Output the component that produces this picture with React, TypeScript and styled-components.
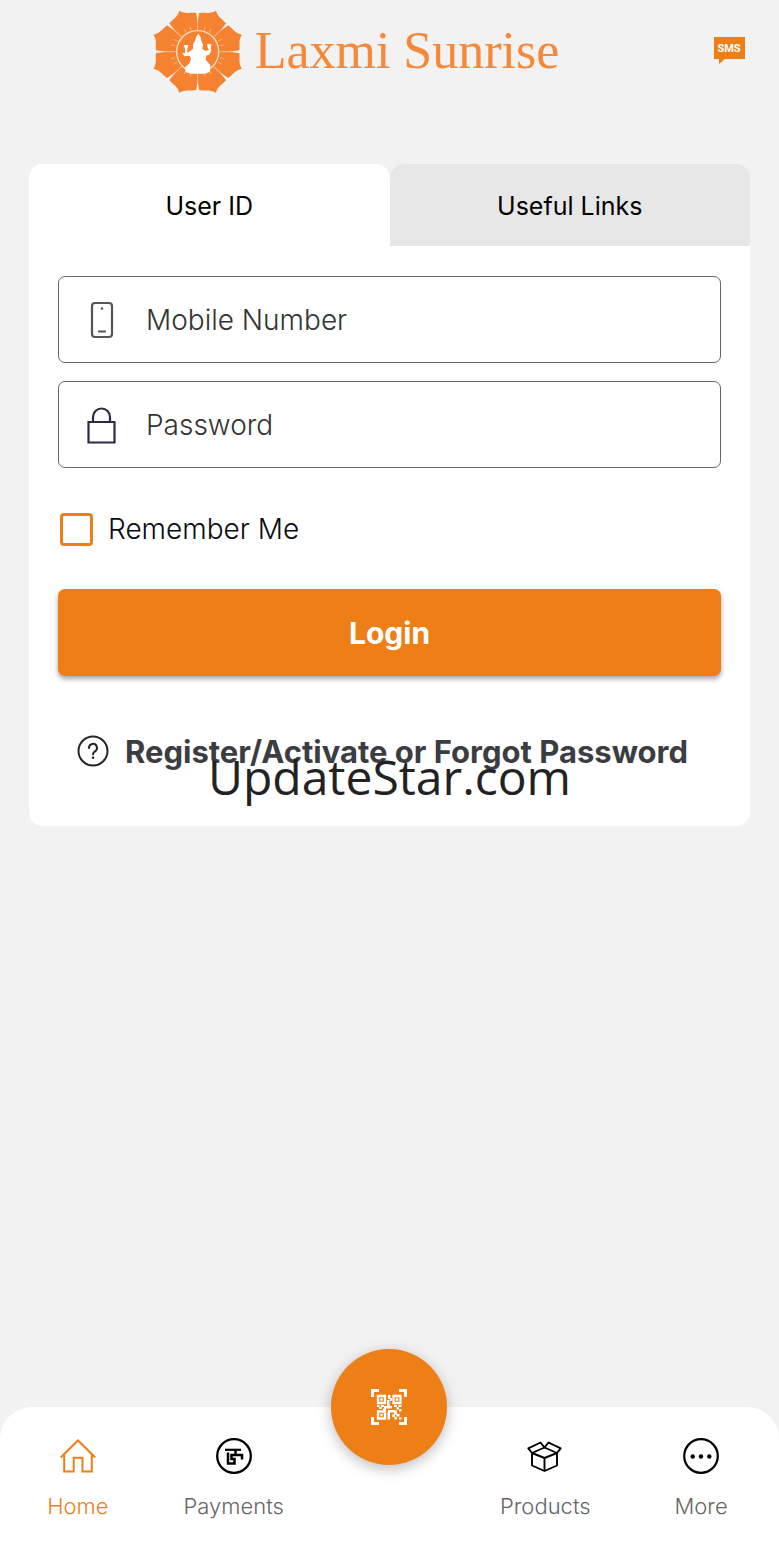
import React, { useState } from "react";
import styled, { createGlobalStyle } from "styled-components";

const GlobalStyle = createGlobalStyle`
  *, *::before, *::after { box-sizing: border-box; }
  body { margin: 0; background: #f2f2f2; font-family: Inter, "Liberation Sans", sans-serif; color: #111; }
  button, input { font: inherit; color: inherit; }
  svg { display: block; flex: none; }
`;

const Page = styled.div`
  position: relative;
  min-height: 100vh;
  display: flex;
  flex-direction: column;
`;

const Header = styled.header`
  display: flex;
  align-items: center;
  justify-content: center;
  gap: 4px;
  height: 102px;
  padding-right: 34px;
`;

const Brand = styled.a`
  flex: 1;
  display: flex;
  align-items: center;
  justify-content: center;
  gap: 12px;
  color: #f6883a;
  text-decoration: none;
  font: 52px/60px "Liberation Serif", serif;
`;

const IconButton = styled.button`
  padding: 0;
  border: 0;
  background: none;
  cursor: pointer;
`;

const Card = styled.main`
  margin: 62px 29px 0;
`;

const Tabs = styled.div`
  display: grid;
  grid-template-columns: 1fr 1fr;
`;

const Tab = styled.button<{ $active: boolean }>`
  height: 82px;
  padding: 2px 0 0;
  border: 0;
  border-radius: 14px 14px 0 0;
  background: ${(p) => (p.$active ? "#fff" : "#e7e7e7")};
  color: #000;
  font-size: 25px;
  cursor: pointer;
`;

const Form = styled.form`
  display: flex;
  flex-direction: column;
  padding: 30px 29px 58px;
  background: #fff;
  border-radius: 0 0 14px 14px;
`;

const Field = styled.label`
  display: flex;
  align-items: center;
  gap: 28px;
  height: 87px;
  margin-bottom: 18px;
  padding: 0 25px;
  border: 1px solid #66666a;
  border-radius: 7px;
`;

const FieldInput = styled.input`
  flex: 1;
  min-width: 0;
  padding: 0;
  border: 0;
  outline: 0;
  background: none;
  font-size: 28px;
  font-weight: 300;
  &::placeholder { color: #333; opacity: 1; }
`;

const Remember = styled.label`
  display: flex;
  align-items: center;
  align-self: flex-start;
  gap: 15px;
  height: 34px;
  margin: 26px 2px 43px;
  font-size: 28px;
  font-weight: 300;
  color: #0a0a14;
`;

const Checkbox = styled.input`
  appearance: none;
  width: 33px;
  height: 33px;
  margin: 0;
  border: 3px solid #ee7f17;
  border-radius: 4px;
  &:checked { background: #ee7f17; }
`;

const LoginButton = styled.button`
  height: 87px;
  border: 0;
  border-radius: 7px;
  background: #ee7f17;
  color: #fff;
  font-size: 30px;
  font-weight: 700;
  box-shadow: 0 3px 5px rgba(0, 0, 0, 0.35);
  cursor: pointer;
`;

const HelpLink = styled.a`
  display: flex;
  align-items: center;
  justify-content: center;
  gap: 16px;
  height: 34px;
  margin-top: 58px;
  padding-right: 14px;
  color: #3c3d42;
  font-size: 31px;
  font-weight: 700;
  text-decoration: none;
  white-space: nowrap;
`;

const Watermark = styled.div`
  position: absolute;
  inset: 0;
  display: grid;
  place-items: center;
  padding-top: 6px;
  pointer-events: none;
  font: 48px/60px "Open Sans", "Noto Sans", sans-serif;
  color: #222;
`;

const NavBar = styled.nav`
  display: grid;
  grid-template-columns: repeat(5, 1fr);
  justify-items: center;
  height: 140px;
  margin-top: auto;
  background: #fff;
  border-radius: 32px 32px 0 0;
`;

const NavItem = styled.a<{ $active?: boolean }>`
  display: flex;
  flex-direction: column;
  align-items: center;
  gap: 17px;
  padding-top: 30px;
  color: ${(p) => (p.$active ? "#ee7f17" : "#666")};
  font-size: 22px;
  font-weight: 300;
  line-height: 28px;
  text-decoration: none;
  svg { color: ${(p) => (p.$active ? "#ee7f17" : "#000")}; }
`;

const ScanButton = styled.button`
  display: grid;
  place-items: center;
  width: 116px;
  height: 116px;
  margin-top: -58px;
  padding: 0;
  border: 0;
  border-radius: 50%;
  background: #ee7f17;
  color: #fff;
  box-shadow: 0 4px 14px rgba(0, 0, 0, 0.25);
  cursor: pointer;
`;

const PETALS = [0, 45, 90, 135, 180, 225, 270, 315];

const LotusLogo = () => (
  <svg width="92" height="84" viewBox="-140 -128 276 252" aria-hidden="true">
    <g transform="scale(1.08 1)">
      {PETALS.map((a) => (
        <path
          key={a}
          transform={`rotate(${a + 22.5})`}
          d="M0 0 L-36 -88 C-44 -92 -47 -100 -43 -107 C-28 -117 -12 -116 0 -133 C12 -116 28 -117 43 -107 C47 -100 44 -92 36 -88 Z"
          fill="#f58230"
        />
      ))}
      {PETALS.map((a) => (
        <path key={a} transform={`rotate(${a})`} d="M0 -64 V-92 M18 -63 L21 -74 M-18 -63 L-21 -74" stroke="#fab27c" strokeWidth="3" />
      ))}
      {PETALS.map((a) => (
        <path key={a} transform={`rotate(${a})`} d="M0 -88 L-5 -120 H5 Z" fill="#f2f2f2" />
      ))}
    </g>
    <circle r="63" fill="#f58230" stroke="#fde0c6" strokeWidth="4" />
    <g fill="#fff">
      <path d="M2 -54 L9 -43 L11 -32 L16 -22 L14 -8 L24 -2 L34 -6 L30 -22 L37 -24 L41 -4 L36 8 L26 12 L24 24 L38 40 L37 60 L22 66 H-20 L-37 61 L-37 46 L-24 34 L-20 22 L-24 12 L-40 14 L-46 4 L-34 5 L-26 0 L-14 -8 L-14 -22 L-8 -32 L-5 -43 Z" />
      <path d="M-42 -20 L-28 -20 L-31 -8 L-32 8 L-37 8 L-38 -8 Z M28 -22 L42 -22 L38 -8 H31 Z" />
    </g>
  </svg>
);

const SmsIcon = () => (
  <svg width="31" height="28" viewBox="0 0 31 28" aria-hidden="true">
    <path d="M0 0H31V22H11L5 27V22H0Z" fill="#ee7f17" />
    <text x="15" y="15" textAnchor="middle" fill="#fff" fontFamily="Roboto, sans-serif" fontWeight="700" fontSize="11">SMS</text>
  </svg>
);

const PhoneIcon = () => (
  <svg width="34" height="40" viewBox="0 0 34 40" fill="none" aria-hidden="true">
    <rect x="8" y="3" width="20" height="34" rx="3" stroke="#55565c" strokeWidth="2.2" />
    <circle cx="18" cy="8.5" r="1.3" fill="#55565c" />
    <path d="M15 31.5h6" stroke="#55565c" strokeWidth="2.2" strokeLinecap="round" />
  </svg>
);

const LockIcon = () => (
  <svg width="34" height="40" viewBox="0 0 34 40" fill="none" stroke="#2b2b45" strokeWidth="2.2" aria-hidden="true">
    <path d="M4.500 17H30.500V37.5H4.500Z" />
    <path d="M9 17V12a8.500 8.500 0 0 1 17 0v5" />
  </svg>
);

const HelpIcon = () => (
  <svg width="32" height="32" viewBox="0 0 32 32" fill="none" stroke="#26262a" strokeWidth="2" aria-hidden="true">
    <circle cx="16" cy="16" r="14.500" />
    <path d="M12 13a4 4 0 1 1 6 3.300c-1.500 1-2 1.500-2 3.200" strokeLinecap="round" />
    <circle cx="16" cy="22.800" r="1.300" fill="#26262a" stroke="none" />
  </svg>
);

const HomeIcon = () => (
  <svg width="38" height="38" viewBox="0 0 38 38" fill="none" stroke="currentColor" strokeWidth="2" aria-hidden="true">
    <path d="M1.800 20.500L19 3.500L36.200 20.500" />
    <path d="M5.200 17.500V34.500H14.700V20.700H23.500V34.500H32.800V17.500" />
  </svg>
);

const RupeeIcon = () => (
  <svg width="38" height="38" viewBox="0 0 38 38" fill="none" stroke="currentColor" aria-hidden="true">
    <circle cx="19" cy="19" r="16.800" strokeWidth="2.300" />
    <path d="M10 12.800H26" strokeWidth="2.200" />
    <path d="M20.500 12.500V18H27V22.500M13 15.500V26.500H19.500V22H16.500V18H20.500" strokeWidth="2.500" />
  </svg>
);

const BoxIcon = () => (
  <svg width="38" height="38" viewBox="0 0 38 38" fill="none" stroke="currentColor" strokeWidth="1.900" strokeLinejoin="round" aria-hidden="true">
    <path d="M6 16V28.500L18.500 34L31 28.500V16" />
    <path d="M18.500 21V34M6 16L18.500 10.500L31 16L18.500 21Z" />
    <path d="M6 16L2.300 11.300L14.500 5.500L18.500 10.500L22.500 5.500L34.700 11.300L31 16" />
  </svg>
);

const MoreIcon = () => (
  <svg width="38" height="38" viewBox="0 0 38 38" fill="currentColor" aria-hidden="true">
    <circle cx="19" cy="19" r="16.800" fill="none" stroke="currentColor" strokeWidth="2.200" />
    <circle cx="10.700" cy="19.500" r="2.200" />
    <circle cx="19" cy="19.500" r="2.200" />
    <circle cx="27.300" cy="19.500" r="2.200" />
  </svg>
);

const QrIcon = () => (
  <svg width="38" height="38" viewBox="0 0 38 38" fill="none" stroke="currentColor" aria-hidden="true">
    <path d="M2.500 9V2.500H9M29 2.500H35.500V9M35.500 29V35.500H29M9 35.500H2.500V29" strokeWidth="3" />
    <path d="M8 8h7v7H8ZM23.500 8h7v7h-7ZM8 23.500h7v7H8Z" strokeWidth="2.300" />
    <path d="M10.300 10.300h2.400v2.400h-2.400ZM25.800 10.300h2.400v2.400h-2.400ZM10.300 25.800h2.400v2.400h-2.400Z" fill="currentColor" stroke="none" />
    <path
      d="M18 7h2.500v4H18ZM20 10h2v3h-2ZM17 12h2.500v4H17ZM7 17h2.500v2H7ZM11 17h3v2h-3ZM9 19h3v2H9ZM14 18h8v2.500h-8ZM17 16h3v2h-3ZM13 20.500h3v2h-3ZM24 17h3v2h-3ZM28.500 17h3v2h-3ZM26.500 19h2.500v2.500h-2.500ZM29 21h2.500v2.500H29ZM18 22h7v2.500h-7ZM24 22.500h3v4h-3ZM17.500 24h2.500v7.500h-2.500ZM22 26.500h3v2.500h-3ZM26.500 26h3v2.500h-3ZM24.500 29h2.500v2.500h-2.500ZM29 29.500h2.500v2H29Z"
      fill="currentColor"
      stroke="none"
    />
  </svg>
);

export default function App() {
  const [tab, setTab] = useState(0);
  return (
    <Page>
      <GlobalStyle />
      <Header>
        <Brand href="#home">
          <LotusLogo />
          Laxmi Sunrise
        </Brand>
        <IconButton type="button" aria-label="SMS banking">
          <SmsIcon />
        </IconButton>
      </Header>
      <Card>
        <Tabs role="tablist">
          {["User ID", "Useful Links"].map((name, i) => (
            <Tab key={name} type="button" role="tab" aria-selected={tab === i} $active={tab === i} onClick={() => setTab(i)}>
              {name}
            </Tab>
          ))}
        </Tabs>
        <Form onSubmit={(e) => e.preventDefault()}>
          <Field>
            <PhoneIcon />
            <FieldInput type="tel" placeholder="Mobile Number" aria-label="Mobile Number" />
          </Field>
          <Field>
            <LockIcon />
            <FieldInput type="password" placeholder="Password" aria-label="Password" />
          </Field>
          <Remember>
            <Checkbox type="checkbox" />
            Remember Me
          </Remember>
          <LoginButton type="submit">Login</LoginButton>
          <HelpLink href="#register">
            <HelpIcon />
            Register/Activate or Forgot Password
          </HelpLink>
        </Form>
      </Card>
      <NavBar>
        <NavItem href="#home" $active><HomeIcon />Home</NavItem>
        <NavItem href="#payments"><RupeeIcon />Payments</NavItem>
        <ScanButton type="button" aria-label="Scan QR code"><QrIcon /></ScanButton>
        <NavItem href="#products"><BoxIcon />Products</NavItem>
        <NavItem href="#more"><MoreIcon />More</NavItem>
      </NavBar>
      <Watermark>UpdateStar.com</Watermark>
    </Page>
  );
}
